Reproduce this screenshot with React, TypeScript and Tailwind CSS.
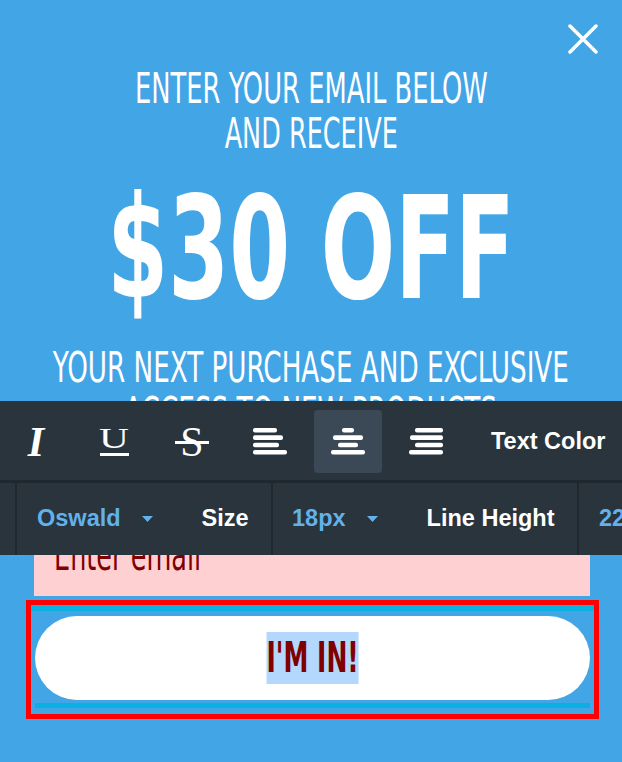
import React from 'react';

const tools = ['italic', 'underline', 'strike', 'left', 'center', 'right'];

const alignBars: Record<string, { x: number; w: number }[]> = {
  left: [
    { x: 0, w: 24 },
    { x: 0, w: 30 },
    { x: 0, w: 26 },
    { x: 0, w: 34 },
  ],
  center: [
    { x: 11, w: 12 },
    { x: 2, w: 30 },
    { x: 7, w: 20 },
    { x: 0, w: 34 },
  ],
  right: [
    { x: 6, w: 28 },
    { x: 1, w: 33 },
    { x: 6, w: 28 },
    { x: 0, w: 34 },
  ],
};

function AlignIcon({ kind }: { kind: string }) {
  const ys = [0, 7.3, 14.7, 22];
  return (
    <svg width="34" height="27" viewBox="0 0 34 27">
      {alignBars[kind].map((b, i) => (
        <rect key={i} x={b.x} y={ys[i]} width={b.w} height="4.6" rx="2" fill="#fff" />
      ))}
    </svg>
  );
}

function ToolIcon({ kind }: { kind: string }) {
  if (kind === 'italic') {
    return (
      <span className="font-['Liberation_Serif',serif] text-[42px] leading-[42px] font-bold italic text-white">I</span>
    );
  }
  if (kind === 'underline') {
    return (
      <div className="flex flex-col items-center mb-[4px]">
        <span className="font-['Liberation_Serif',serif] text-[30px] leading-[30px] text-white scale-x-[1.38]">U</span>
        <div className="w-[29px] h-[2.5px] bg-white" />
      </div>
    );
  }
  if (kind === 'strike') {
    return (
      <div className="relative flex items-center justify-center w-[34px]">
        <span className="font-['Liberation_Serif',serif] text-[42px] leading-[42px] text-white">S</span>
        <div className="absolute left-0 top-[20px] w-[34px] h-[3px] bg-white" />
      </div>
    );
  }
  return <AlignIcon kind={kind} />;
}

function Caret() {
  return (
    <svg width="11" height="6" viewBox="0 0 11 6">
      <path d="M0 0h11L5.5 6z" fill="#62b1ea" />
    </svg>
  );
}

export default function App() {
  return (
    <div className="relative w-full h-[762px] overflow-hidden bg-[#42a5e6] font-['DejaVu_Sans_Condensed',sans-serif]">
      <button className="absolute left-[568px] top-[24px]">
        <svg width="30" height="30" viewBox="0 0 30 30">
          <path d="M2 2l26 26M28 2L2 28" stroke="#fff" strokeWidth="3.5" strokeLinecap="round" />
        </svg>
      </button>

      <div className="flex flex-col items-center pt-[66px] text-white">
        <span className="whitespace-nowrap text-[42px] leading-[45px] scale-x-[0.683]">ENTER YOUR EMAIL BELOW</span>
        <span className="whitespace-nowrap text-[42px] leading-[45px] scale-x-[0.675]">AND RECEIVE</span>
        <span className="mt-[22px] whitespace-nowrap text-[142px] leading-[142px] font-bold scale-x-[0.686]">$30 OFF</span>
        <span className="mt-[25px] whitespace-nowrap text-[42px] leading-[45px] scale-x-[0.694]">
          YOUR NEXT PURCHASE AND EXCLUSIVE
        </span>
        <span className="whitespace-nowrap text-[42px] leading-[45px] scale-x-[0.694]">ACCESS TO NEW PRODUCTS</span>
      </div>

      <div className="mt-[81px] ml-[34px] w-[556px] h-[80px] bg-[#ffd0d2] pl-[20px] flex items-center">
        <span className="origin-left scale-x-[0.676] whitespace-nowrap text-[42px] leading-[80px] text-[#800000]">
          Enter email
        </span>
      </div>

      <div className="mt-[4px] ml-[26px] w-[573px] border-[5px] border-[#ff0000]">
        <div className="border-t-[6px] border-[#0bb0e3] pt-[5px] px-[4px]">
          <div className="h-[84px] rounded-full bg-white flex items-center justify-center">
            <span className="inline-block h-[52px] leading-[52px] bg-[#b4d7fe] text-[42px] font-bold text-[#800000] whitespace-nowrap scale-x-[0.662]">
              I'M IN!
            </span>
          </div>
          <div className="h-[3px]" />
          <div className="h-[5px] bg-[#0bb0e3]" />
          <div className="h-[6px]" />
        </div>
      </div>

      <div className="absolute left-0 top-[401px] w-full overflow-hidden bg-[#29343d] font-['Liberation_Sans',Arial,sans-serif]">
        <div className="flex items-center pl-[2px] pt-[9px] pb-[7px] gap-[10px]">
          {tools.map((t) => (
            <div
              key={t}
              className={
                'shrink-0 w-[68px] h-[63px] rounded-[4px] flex items-center justify-center ' +
                (t === 'center' ? 'bg-[#3b4855]' : '')
              }
            >
              <ToolIcon kind={t} />
            </div>
          ))}
          <span className="shrink-0 ml-[21px] whitespace-nowrap text-[23.5px] font-bold text-white">Text Color</span>
        </div>
        <div className="h-[3px] bg-[#1f282f]" />
        <div className="flex h-[72px] whitespace-nowrap text-[23.5px] font-bold">
          <div className="shrink-0 w-[15px]" />
          <div className="shrink-0 w-[2px] bg-[#1f282f]" />
          <div className="shrink-0 w-[254px] flex items-center pl-[20px]">
            <span className="text-[#62b1ea]">Oswald</span>
            <span className="ml-[21px] flex"><Caret /></span>
            <span className="ml-[49px] text-white">Size</span>
          </div>
          <div className="shrink-0 w-[2px] bg-[#1f282f]" />
          <div className="shrink-0 w-[304px] flex items-center pl-[19px]">
            <span className="text-[#62b1ea]">18px</span>
            <span className="ml-[21px] flex"><Caret /></span>
            <span className="ml-[49px] text-white">Line Height</span>
          </div>
          <div className="shrink-0 w-[2px] bg-[#1f282f]" />
          <div className="shrink-0 flex items-center pl-[20px]">
            <span className="text-[#62b1ea]">22px</span>
          </div>
        </div>
      </div>
    </div>
  );
}
